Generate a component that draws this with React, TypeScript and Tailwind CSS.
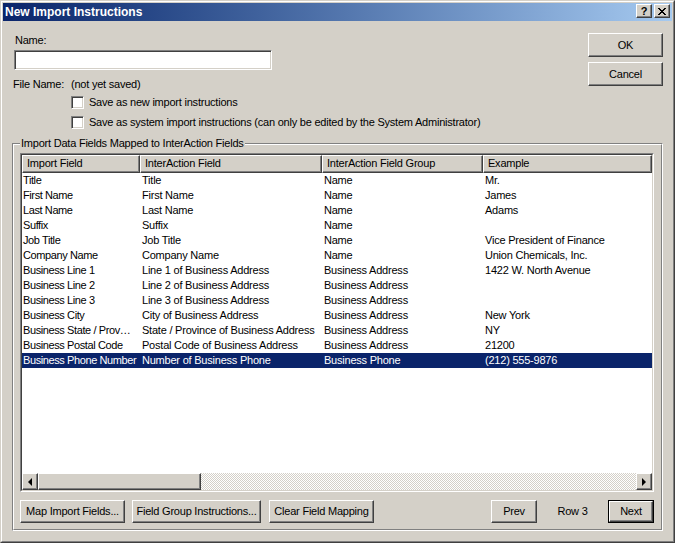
import React from 'react';

type Row = [string, string, string, string];

const rows: Row[] = [
  ['Title', 'Title', 'Name', 'Mr.'],
  ['First Name', 'First Name', 'Name', 'James'],
  ['Last Name', 'Last Name', 'Name', 'Adams'],
  ['Suffix', 'Suffix', 'Name', ''],
  ['Job Title', 'Job Title', 'Name', 'Vice President of Finance'],
  ['Company Name', 'Company Name', 'Name', 'Union Chemicals, Inc.'],
  ['Business Line 1', 'Line 1 of Business Address', 'Business Address', '1422 W. North Avenue'],
  ['Business Line 2', 'Line 2 of Business Address', 'Business Address', ''],
  ['Business Line 3', 'Line 3 of Business Address', 'Business Address', ''],
  ['Business City', 'City of Business Address', 'Business Address', 'New York'],
  // column too narrow in the original, shown cut off
  ['Business State / Prov\u2026', 'State / Province of Business Address', 'Business Address', 'NY'],
  ['Business Postal Code', 'Postal Code of Business Address', 'Business Address', '21200'],
  ['Business Phone Number', 'Number of Business Phone', 'Business Phone', '(212) 555-9876']
];

const selectedRow = 12;

const raised =
  'border border-t-white border-l-white border-b-[#404040] border-r-[#404040] shadow-[inset_-1px_-1px_0_#808080]';

const Button: React.FC<{ label: string; className?: string; isDefault?: boolean }> = ({
  label,
  className = '',
  isDefault
}) => {
  if (isDefault) {
    return <div className={`border border-black ${className}`}>
        <div className={`${raised} h-full flex items-center justify-center`}>{label}</div>
      </div>;
  }
  return <div className={`${raised} flex items-center justify-center ${className}`}>{label}</div>;
};

const Checkbox: React.FC<{ label: string; className?: string }> = ({ label, className = '' }) => (
  <div className={`flex items-center h-[13px] ${className}`}>
    <div className="w-[13px] h-[13px] bg-white border border-t-[#808080] border-l-[#808080] border-b-white border-r-white shadow-[inset_1px_1px_0_#404040,inset_-1px_-1px_0_#d4d0c8]"></div>
    <span className="ml-[5px] leading-[13px]">{label}</span>
  </div>
);

const colWidths = ['w-[118px]', 'w-[182px]', 'w-[161px]', 'flex-1'];
const headers = ['Import Field', 'InterAction Field', 'InterAction Field Group', 'Example'];

export default function App() {
  return <div className="w-[675px] h-[543px] bg-[#d4d0c8] border border-t-[#d4d0c8] border-l-[#d4d0c8] border-b-[#404040] border-r-[#404040] font-['Liberation_Sans',Arial,sans-serif] text-[11px] tracking-[-0.22px] text-black select-none">
      <div className="h-full border border-t-white border-l-white border-b-[#808080] border-r-[#808080] p-px flex flex-col">
        {/* title bar */}
        <div className="h-[18px] shrink-0 flex items-start bg-linear-to-r from-[#0a246a] to-[#a6caf0]">
          <span className="pl-[2px] text-white font-bold text-[12px] tracking-normal leading-[18px]">New Import Instructions</span>
          <div className="ml-auto mt-[1px] mr-[2px] flex gap-[2px]">
            <div className={`${raised} w-[16px] h-[14px] bg-[#d4d0c8] flex items-center justify-center font-bold text-[11px] tracking-normal leading-none`}>?</div>
            <div className={`${raised} w-[16px] h-[14px] bg-[#d4d0c8] flex items-center justify-center`}>
              <svg width="8" height="7" viewBox="0 0 8 7" shapeRendering="crispEdges">
                <path d="M0 0h2v1h-2zM6 0h2v1h-2zM1 1h2v1h-2zM5 1h2v1h-2zM2 2h4v1h-4zM3 3h2v1h-2zM2 4h4v1h-4zM1 5h2v1h-2zM5 5h2v1h-2zM0 6h2v1h-2zM6 6h2v1h-2z" fill="#000" />
              </svg>
            </div>
          </div>
        </div>

        {/* top section */}
        <div className="h-[122px] shrink-0 flex">
          <div className="flex-1 flex flex-col">
            <div className="mt-[13px] ml-[12px] leading-[13px]">Name:</div>
            <div className="mt-[3px] ml-[11px] w-[258px] h-[20px] bg-white border border-t-[#808080] border-l-[#808080] border-b-white border-r-white shadow-[inset_1px_1px_0_#404040,inset_-1px_-1px_0_#d4d0c8]"></div>
            <div className="mt-[8px] ml-[10px] flex leading-[13px]">
              <span className="w-[58px]">File Name:</span>
              <span>(not yet saved)</span>
            </div>
            <Checkbox className="mt-[5px] ml-[68px]" label="Save as new import instructions" />
            <Checkbox className="mt-[7px] ml-[68px]" label="Save as system import instructions (can only be edited by the System Administrator)" />
          </div>
          <div className="pt-[12px] pr-[9px] flex flex-col">
            <Button label="OK" className="w-[75px] h-[24px]" />
            <Button label="Cancel" className="mt-[5px] w-[75px] h-[24px]" />
          </div>
        </div>

        {/* group box */}
        <div className="ml-[9px] mr-[9px] h-[388px] shrink-0 border border-t-[#808080] border-l-[#808080] border-b-white border-r-white">
          <div className="h-full border border-t-white border-l-white border-b-[#808080] border-r-[#808080] flex flex-col">
            <div className="-mt-[8px] ml-[6px] px-[1px] w-fit bg-[#d4d0c8] leading-[13px]">Import Data Fields Mapped to InterAction Fields</div>

            {/* list view */}
            <div className="mt-[3px] ml-[6px] w-[634px] h-[339px] border border-t-[#808080] border-l-[#808080] border-b-white border-r-white">
              <div className="h-full border border-t-[#404040] border-l-[#404040] border-b-[#d4d0c8] border-r-[#d4d0c8] flex flex-col bg-white">
                <div className="h-[18px] shrink-0 flex bg-[#d4d0c8]">
                  {headers.map((h, i) => <div key={h} className={`${colWidths[i]} ${raised} px-[4px] leading-[15px] whitespace-nowrap overflow-hidden`}>
                      {h}
                    </div>)}
                </div>
                <div className="flex-1">
                  {rows.map((r, ri) => <div key={ri} className={`h-[15px] flex leading-[15px] ${ri === selectedRow ? 'bg-[#0a246a] text-white' : ''}`}>
                      {r.map((c, ci) => <div key={ci} className={`${colWidths[ci]} ${ci === 0 ? 'pl-[1px] tracking-[-0.4px]' : 'pl-[2px]'} whitespace-nowrap overflow-hidden text-ellipsis`}>
                          {c}
                        </div>)}
                    </div>)}
                </div>
                {/* horizontal scrollbar */}
                <div className="h-[17px] shrink-0 flex bg-[#d4d0c8]">
                  <div className={`${raised} w-[16px] flex items-center justify-center`}>
                    <div className="w-0 h-0 border-y-[4px] border-y-transparent border-r-[4px] border-r-black"></div>
                  </div>
                  <div className={`${raised} w-[163px]`}></div>
                  <div className="flex-1 bg-[repeating-conic-gradient(#ffffff_0%_25%,#d4d0c8_0%_50%)] bg-[length:2px_2px]"></div>
                  <div className={`${raised} w-[16px] flex items-center justify-center`}>
                    <div className="w-0 h-0 border-y-[4px] border-y-transparent border-l-[4px] border-l-black"></div>
                  </div>
                </div>
              </div>
            </div>

            {/* bottom buttons */}
            <div className="mt-[8px] ml-[6px] mr-[7px] flex">
              <Button label="Map Import Fields..." className="w-[105px] h-[23px]" />
              <Button label="Field Group Instructions..." className="ml-[7px] w-[129px] h-[23px]" />
              <Button label="Clear Field Mapping" className="ml-[8px] w-[105px] h-[23px]" />
              <div className="flex-1"></div>
              <Button label="Prev" className="w-[46px] h-[23px]" />
              <div className="w-[71px] flex items-center justify-center">Row 3</div>
              <Button label="Next" className="w-[46px] h-[23px]" isDefault />
            </div>
          </div>
        </div>
      </div>
    </div>;
}
